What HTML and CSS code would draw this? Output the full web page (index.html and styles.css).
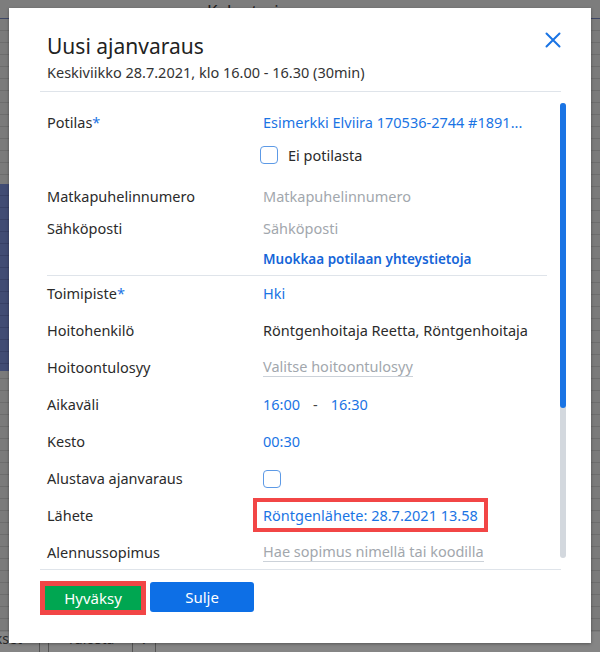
FILE: index.html
```html
<!DOCTYPE html>
<html lang="fi">
<head>
  <meta charset="UTF-8" />
  <meta name="viewport" content="width=device-width, initial-scale=1.0"/>
  <title>Kalenteri</title>
  <link rel="stylesheet" href="styles.css">
</head>
<body>
  <!-- sivu taustalla -->
  <div class="page">
    <div class="page-head">Kalenteri</div>
    <div class="page-cal">
      <div class="cal-side"><div class="cal-busy"></div></div>
      <div class="cal-main"></div>
    </div>
    <div class="page-bar">
      <span class="bar-cut">Varaukset</span>
      <span class="bar-btn">Tulosta</span>
      <span class="bar-caret">&#8964;</span>
    </div>
  </div>

  <!-- ajanvaraus-dialogi -->
  <div class="modal">
    <div class="modal-header">
      <div>
        <h1 class="modal-title">Uusi ajanvaraus</h1>
        <p class="modal-sub">Keskiviikko 28.7.2021, klo 16.00 - 16.30 (30min)</p>
      </div>
      <button class="close" aria-label="Sulje">
        <svg width="16" height="16" viewBox="0 0 16 16">
          <path d="M1.5 1.5 L14.5 14.5 M14.5 1.5 L1.5 14.5" stroke="#1a74e4" stroke-width="2" fill="none" stroke-linecap="round"/>
        </svg>
      </button>
    </div>

    <div class="modal-body">
      <div class="form">
        <div class="section">
          <div class="row">
            <span class="label">Potilas<span class="req">*</span></span>
            <span class="value link">Esimerkki Elviira 170536-2744 #1891...</span>
          </div>
          <div class="row row-check">
            <span></span>
            <label class="check check-shift"><span class="box"></span>Ei potilasta</label>
          </div>
          <div class="row row-gap">
            <span class="label">Matkapuhelinnumero</span>
            <span class="value muted">Matkapuhelinnumero</span>
          </div>
          <div class="row">
            <span class="label">Sähköposti</span>
            <span class="value muted">Sähköposti</span>
          </div>
          <div class="row row-last">
            <span></span>
            <a class="edit-link">Muokkaa potilaan yhteystietoja</a>
          </div>
        </div>

        <div class="section">
          <div class="row row-tall">
            <span class="label">Toimipiste<span class="req">*</span></span>
            <span class="value link">Hki</span>
          </div>
          <div class="row row-tall">
            <span class="label">Hoitohenkilö</span>
            <span class="value">Röntgenhoitaja Reetta, Röntgenhoitaja</span>
          </div>
          <div class="row row-tall">
            <span class="label">Hoitoontulosyy</span>
            <span class="value"><span class="field">Valitse hoitoontulosyy</span></span>
          </div>
          <div class="row row-tall">
            <span class="label">Aikaväli</span>
            <span class="value link">16:00<span class="dash">-</span>16:30</span>
          </div>
          <div class="row row-tall">
            <span class="label">Kesto</span>
            <span class="value link">00:30</span>
          </div>
          <div class="row row-tall">
            <span class="label">Alustava ajanvaraus</span>
            <span class="value"><span class="box"></span></span>
          </div>
          <div class="row row-tall">
            <span class="label">Lähete</span>
            <span class="value"><span class="marked link">Röntgenlähete: 28.7.2021 13.58</span></span>
          </div>
          <div class="row row-tall">
            <span class="label">Alennussopimus</span>
            <span class="value"><span class="field">Hae sopimus nimellä tai koodilla</span></span>
          </div>
        </div>
      </div>
      <div class="scrollbar"><div class="scroll-thumb"></div></div>
    </div>

    <div class="modal-footer">
      <button class="btn btn-ok">Hyväksy</button>
      <button class="btn btn-close">Sulje</button>
    </div>
  </div>
</body>
</html>
```

FILE: styles.css
```css
* {
  box-sizing: border-box;
  margin: 0;
  padding: 0;
  font-family: 'Noto Sans', 'Open Sans', sans-serif;
}

body {
  width: 600px;
  height: 652px;
  overflow: hidden;
  background: #7d7d7d;
}

/*********TAUSTASIVU***********/
.page {
  height: 652px;
  display: flex;
  flex-direction: column;
}

.page-head {
  height: 19px;
  padding-left: 207px;
  font-size: 17px;
  line-height: 22px;
  color: #1c1c1c;
  border-bottom: 1px solid #3e4766;
}

.page-cal {
  flex: 1;
  display: flex;
  background: repeating-linear-gradient(to bottom, #7b7b7b 0 11px, #6d6d6d 11px 12px);
}

.cal-side {
  width: 20px;
  border-right: 1px solid #666;
}

.cal-busy {
  margin-top: 165px;
  height: 187px;
  background: repeating-linear-gradient(to bottom, #414c74 0 11px, #374066 11px 12px);
}

.cal-main {
  flex: 1;
}

.page-bar {
  height: 20px;
  display: flex;
  align-items: flex-start;
  background: #858585;
  font-size: 14px;
  line-height: 14px;
  color: #2a2a2a;
}

.bar-cut {
  width: 40px;
  padding-right: 17px;
  overflow: hidden;
  white-space: nowrap;
  direction: rtl;
  border-right: 1px solid #555;
  height: 20px;
}

.bar-btn {
  margin-left: 8px;
  padding: 0 18px;
  border-left: 1px solid #555;
  border-right: 1px solid #555;
  height: 20px;
}

.bar-caret {
  padding: 0 5px;
  border-right: 1px solid #555;
  height: 20px;
}

/*********DIALOGI***********/
.modal {
  position: absolute;
  top: 8px;
  left: 9px;
  width: 582px;
  height: 635px;
  background: #fff;
  box-shadow: 0 1px 3px rgba(0, 0, 0, 0.35);
  display: flex;
  flex-direction: column;
  padding: 0 25px 0 31px;
}

.modal-header {
  display: flex;
  justify-content: space-between;
  align-items: flex-start;
  padding: 24px 0 9px 7px;
  margin-right: 5px;
  border-bottom: 1px solid #dfe4ea;
}

.modal-title {
  font-size: 21px;
  line-height: 28px;
  font-weight: normal;
  color: #222;
}

.modal-sub {
  margin-top: 2px;
  font-size: 14.5px;
  line-height: 20px;
  color: #333;
}

.close {
  width: 16px;
  height: 16px;
  border: none;
  background: none;
  display: flex;
}

.modal-body {
  flex: 1;
  min-height: 0;
  display: flex;
}

.form {
  flex: 1;
  overflow: hidden;
  padding: 15px 13px 0 7px;
}

.section + .section,
.section:first-child {
  border-bottom: 1px solid #dfe4ea;
}

.row {
  display: grid;
  grid-template-columns: 216px 1fr;
  align-items: center;
  height: 32px;
  padding-bottom: 2px;
  font-size: 14.5px;
  line-height: 20px;
  color: #2b2b2b;
  white-space: nowrap;
}

.row-check {
  height: 34px;
}

.row-gap {
  margin-top: 8px;
}

.row-last {
  height: 30px;
  padding-bottom: 3px;
}

.row-tall {
  height: 37px;
  padding-bottom: 4px;
}

.req {
  color: #1a74e4;
}

.link {
  color: #1a74e4;
}

.muted {
  color: #a2a7ad;
}

.edit-link {
  color: #1565d8;
  font-weight: 600;
  font-size: 13.5px;
}

.field {
  display: inline-block;
  color: #a2a7ad;
  border-bottom: 1px solid #ccd2d9;
}

.dash {
  color: #444;
  margin: 0 13px;
}

.check {
  display: flex;
  align-items: center;
  gap: 10px;
  color: #2b2b2b;
}

.check-shift {
  margin-left: -3px;
}

.box {
  display: inline-block;
  width: 18px;
  height: 18px;
  border: 1.5px solid #5d9ae6;
  border-radius: 4px;
  vertical-align: middle;
}

.marked {
  display: inline-block;
  margin-left: -10px;
  padding: 3px 6px;
  border: 4px solid #f24646;
}

.scrollbar {
  width: 6px;
  margin: 11px 0;
  background: #d3d8de;
  border-radius: 3px;
}

.scroll-thumb {
  height: 305px;
  background: #1a74e4;
  border-radius: 3px;
}

.modal-footer {
  height: 74px;
  margin-right: 5px;
  border-top: 1px solid #dfe4ea;
  padding-top: 11px;
  display: flex;
  align-items: flex-start;
  gap: 4px;
}

.btn {
  border: none;
  color: white;
  font-size: 15px;
  cursor: pointer;
}

.btn-ok {
  width: 106px;
  height: 34px;
  background: #00a651;
  border: 5px solid #f24646;
}

.btn-close {
  margin-top: 1px;
  width: 104px;
  height: 30px;
  background: #0d6fe6;
  border-radius: 3px;
}
```
